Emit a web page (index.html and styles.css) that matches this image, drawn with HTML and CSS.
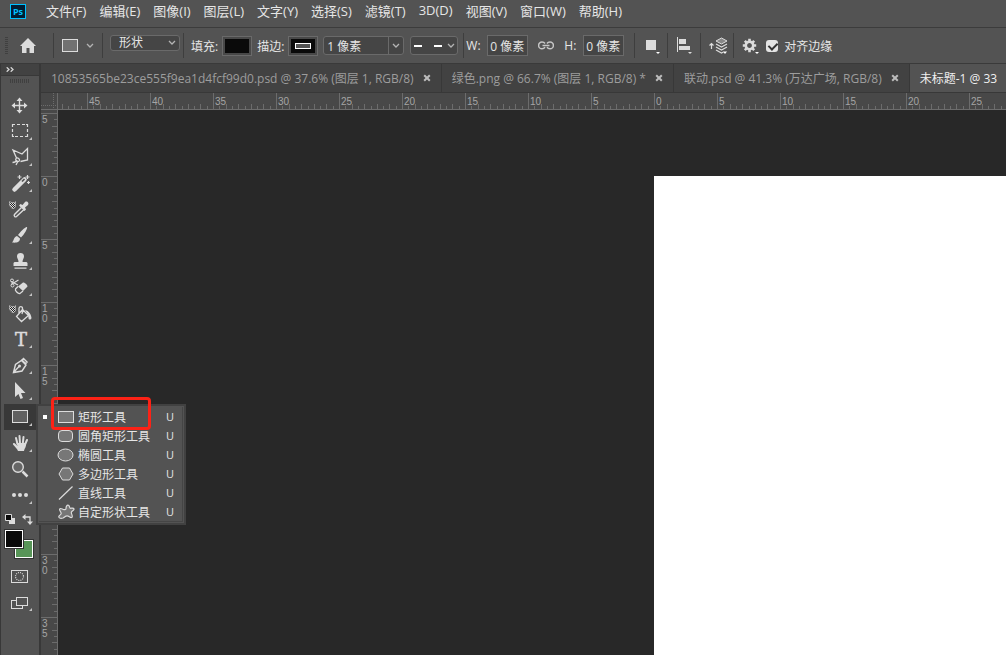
FILE: index.html
```html
<!DOCTYPE html>
<html lang="zh-CN">
<head>
    <meta charset="UTF-8">
    <meta name="viewport" content="width=device-width, initial-scale=1.0">
    <title>未标题-1</title>
    <link rel="stylesheet" href="styles.css">
</head>
<body>

<!-- shared icon parts -->
<svg class="defs" width="0" height="0" aria-hidden="true">
    <defs>
        <pattern id="checker" width="2" height="2" patternUnits="userSpaceOnUse">
            <rect width="2" height="2" fill="#ddd"/>
            <rect width="1" height="1" fill="#222"/>
            <rect x="1" y="1" width="1" height="1" fill="#222"/>
        </pattern>
        <symbol id="more" viewBox="0 0 32 26"><path d="M28 19v3h-3z" fill="#c4c4c4"/></symbol>
        <symbol id="chevron" viewBox="0 0 8 6"><path d="M1 1l3 3 3-3" fill="none" stroke="#b4b4b4" stroke-width="1.3"/></symbol>
        <symbol id="close" viewBox="0 0 8 8"><path d="M1.2 1.2l5.6 5.6M6.8 1.2L1.2 6.8" stroke="#bcbcbc" stroke-width="2"/></symbol>
    </defs>
</svg>

<header class="menu-bar">
    <svg class="logo" width="16" height="15" viewBox="0 0 16 15" role="img" aria-label="Ps">
        <rect x=".5" y=".5" width="15" height="14" fill="#001d33" stroke="#00c0ff"/>
        <text x="8" y="11" text-anchor="middle" class="logo-text">Ps</text>
    </svg>
    <nav class="menus">
        <a href="#">文件(F)</a>
        <a href="#">编辑(E)</a>
        <a href="#">图像(I)</a>
        <a href="#">图层(L)</a>
        <a href="#">文字(Y)</a>
        <a href="#">选择(S)</a>
        <a href="#">滤镜(T)</a>
        <a href="#">3D(D)</a>
        <a href="#">视图(V)</a>
        <a href="#">窗口(W)</a>
        <a href="#">帮助(H)</a>
    </nav>
</header>

<div class="options-bar">
    <div class="grip-v"></div>
    <button class="home" aria-label="主页">
        <svg width="16" height="15" viewBox="0 0 16 15"><path d="M8 0L0 8h2v7h4.500v-5h3v5H14V8h2z" fill="#dcdcdc"/></svg>
    </button>
    <div class="sep"></div>
    <button class="preset" aria-label="矩形工具">
        <svg width="16" height="13" viewBox="0 0 16 13"><rect x=".5" y=".5" width="15" height="12" fill="#717171" stroke="#dcdcdc"/></svg>
        <svg width="8" height="6"><use href="#chevron"/></svg>
    </button>
    <div class="sep"></div>
    <div class="select-box mode">
        <select aria-label="工具模式"><option>形状</option></select>
        <svg width="8" height="6"><use href="#chevron"/></svg>
    </div>
    <div class="sep"></div>
    <div class="field">
        <label for="fill">填充:</label>
        <button id="fill" class="swatch"></button>
    </div>
    <div class="field">
        <label for="stroke">描边:</label>
        <button id="stroke" class="swatch"><span class="stroke-mark"></span></button>
    </div>
    <div class="combo">
        <input type="text" value="1 像素" aria-label="描边宽度">
        <button aria-label="描边宽度选项"><svg width="8" height="6"><use href="#chevron"/></svg></button>
    </div>
    <button class="dash" aria-label="描边类型">
        <svg width="28" height="2" viewBox="0 0 28 2"><path d="M0 1h8M20 1h8" stroke="#fff" stroke-width="2"/></svg>
        <svg width="8" height="6"><use href="#chevron"/></svg>
    </button>
    <div class="sep"></div>
    <label class="dim" for="w">W:</label>
    <input class="num" id="w" type="text" value="0 像素">
    <button class="link" aria-label="链接">
        <svg width="16" height="9" viewBox="0 0 16 9" fill="none" stroke="#c6c6c6" stroke-width="1.5">
            <path d="M7 2.500C6 1 4.500 1 4 1a3.300 3.300 0 000 6.800c1 0 2.200-.3 3-1.600M9 2.500C10 1 11.500 1 12 1a3.300 3.300 0 010 6.800c-1 0-2.200-.3-3-1.600M4.500 4.400h7"/>
        </svg>
    </button>
    <label class="dim" for="h">H:</label>
    <input class="num" id="h" type="text" value="0 像素">
    <div class="sep wide"></div>
    <button class="op" aria-label="路径操作">
        <svg width="20" height="20" viewBox="0 0 20 20"><path d="M3 4h10v10H3z" fill="#dcdcdc"/><path d="M13 16h4l-2 2z" fill="#fff"/></svg>
    </button>
    <div class="sep"></div>
    <button class="op" aria-label="路径对齐方式">
        <svg width="20" height="20" viewBox="0 0 20 20" fill="#dcdcdc"><path d="M1 1h1v15H1zM3 3h7v5H3zM3 10h11v4H3z"/><path d="M12 16h4l-2 2z"/></svg>
    </button>
    <div class="sep"></div>
    <button class="op" aria-label="路径排列方式">
        <svg width="20" height="20" viewBox="0 0 20 20">
            <path d="M2.500 7.500V13M.5 9.500l2-2 2 2" stroke="#dcdcdc" stroke-width="1.200" fill="none"/>
            <path d="M7 5l5.500-3L18 5l-5.500 3z" fill="#888" stroke="#dcdcdc"/>
            <path d="M7 8l5.500 3L18 8M7 11l5.500 3 5.500-3M7 14l5.500 3 2-1" stroke="#dcdcdc" stroke-width="1.200" fill="none"/>
            <path d="M14 15.500h4l-2 2.500z" fill="#fff"/>
        </svg>
    </button>
    <div class="sep"></div>
    <button class="op" aria-label="设置">
        <svg width="20" height="20" viewBox="0 0 20 20">
            <g transform="translate(7.500 9.500)" stroke="#dcdcdc">
                <circle r="3.700" fill="none" stroke-width="2.600"/>
                <path d="M0-6.700v2.500M0 6.700V4.200M-6.700 0h2.500M6.700 0H4.200M-4.700-4.700l1.800 1.800M4.700 4.700L2.900 2.900M-4.700 4.700l1.800-1.800M4.700-4.700L2.900-2.900" stroke-width="2.600"/>
            </g>
            <path d="M13 16h4l-2 2z" fill="#fff"/>
        </svg>
    </button>
    <div class="check">
        <input type="checkbox" id="edges" checked>
        <label for="edges">对齐边缘</label>
    </div>
</div>

<main class="app">
    <aside class="toolbar">
        <button class="expand" aria-label="展开面板">
            <svg width="8" height="5" viewBox="0 0 8 5"><path d="M.7.300L3 2.500.7 4.700M4.700.300L7 2.500 4.700 4.700" fill="none" stroke="#d8d8d8" stroke-width="1.300"/></svg>
        </button>
        <div class="grip-h"></div>

        <button class="tool" aria-label="移动工具">
            <svg viewBox="0 0 32 26"><path d="M15.500 7v13M9 13.500h13" stroke="#dcdcdc" stroke-width="1.400"/><path d="M15.500 5.500l3 3.500h-6zM15.500 21.500l3-3.500h-6zM7.500 13.500l3.500-3v6zM23.500 13.500l-3.500-3v6z" fill="#dcdcdc"/></svg>
        </button>
        <button class="tool" aria-label="矩形选框工具">
            <svg viewBox="0 0 32 26"><path d="M8.500 9V6.500H11M13 6.500h3M18 6.500h3M22 6.500h1.500V9M23.500 11v3M23.500 16v2.500H21M19 18.500h-3M14 18.500h-3M10 18.500H8.500V16M8.500 14v-3" fill="none" stroke="#dcdcdc" stroke-width="1.200"/><use href="#more"/></svg>
        </button>
        <button class="tool" aria-label="多边形套索工具">
            <svg viewBox="0 0 32 26"><path d="M12.500 14L9 6l9 4 5.500-5.500V16l-7 1.500M12.500 14a2 2 0 103 2.500c.3-1.500-1.500-3-3-2.500zM13 16c-1 2-2 2.500-4.500 2.500M14 17l-2 4" fill="none" stroke="#dcdcdc" stroke-width="1.300"/><use href="#more"/></svg>
        </button>
        <button class="tool" aria-label="魔棒工具">
            <svg viewBox="0 0 32 26"><path d="M10.500 19.500l10-10" stroke="#dcdcdc" stroke-width="4.500" stroke-linecap="round"/><path d="M18 11.500l2.500-2.500" stroke="#555" stroke-width="1.700"/><path d="M15.500 5v4M13.500 7h4M23.500 5v4M21.500 7h4M24.500 11v3M23 12.500h3" stroke="#dcdcdc" stroke-width="1.200"/><use href="#more"/></svg>
        </button>
        <button class="tool" aria-label="吸管工具">
            <svg viewBox="0 0 32 26"><path d="M5.500 5.500l2 1h3l1-1v5l-1.500 2H8l-2.500-3z" fill="url(#checker)" stroke="#ccc" stroke-width=".6"/><path d="M17.500 11.500l-7 7c-1 1.500.8 3 2 2l7.500-7" fill="none" stroke="#dcdcdc" stroke-width="1.400"/><path d="M15 9.500l1.500-1.500 2 1 2.500-3c2-1.500 4.500 1 3 3l-3 2.500 1 2-1.500 1.500z" fill="#dcdcdc"/></svg>
        </button>
        <button class="tool" aria-label="画笔工具">
            <svg viewBox="0 0 32 26"><path d="M23 5c1 1-3 8-6 10.500l-3-2.500C16 10 22 4 23 5zM13 14l3 2.500c0 4-4 4.500-8 4 2-1.500 1.500-5.500 5-6.500z" fill="#dcdcdc"/><use href="#more"/></svg>
        </button>
        <button class="tool" aria-label="仿制图章工具">
            <svg viewBox="0 0 32 26"><path d="M13 8.500a3.500 3.500 0 117 0c0 2-1.500 2.500-1.500 5.500h4l1 1v3h-14v-3l1-1h4c0-3-1.500-3.500-1.500-5.500zM10.500 19.500h12v1.200h-12z" fill="#dcdcdc"/><use href="#more"/></svg>
        </button>
        <button class="tool" aria-label="橡皮擦工具">
            <svg viewBox="0 0 32 26"><path d="M7 7.500l7 3.500M7 10.500L14.500 6" stroke="#dcdcdc" stroke-width="1.200"/><circle cx="8" cy="6.500" r="1.500" fill="none" stroke="#dcdcdc"/><circle cx="8.500" cy="11.500" r="1.500" fill="none" stroke="#dcdcdc"/><path d="M19 8.500c1-.8 5 2.500 4.500 4L19 17l-5-4.500z" fill="#dcdcdc"/><path d="M14 12.500L11.500 15c-.8 1.500 2.500 5 4.500 4.500l3-2.500" fill="none" stroke="#dcdcdc" stroke-width="1.300"/><use href="#more"/></svg>
        </button>
        <button class="tool" aria-label="油漆桶工具">
            <svg viewBox="0 0 32 26"><path d="M5.500 5.500l2 1h3l1-1v5l-1.500 2H8l-2.500-3z" fill="url(#checker)" stroke="#ccc" stroke-width=".6"/><path d="M12.500 16.500l6-7 6 6-7 6zM18.500 13V8.500c0-2.500-3.500-2.500-3.500 0V13M19 9l-1 5" fill="none" stroke="#dcdcdc" stroke-width="1.300"/><path d="M21 10c4 1 6 4 6.500 8-.5 2-3 2-3 0 0-2-.5-4-3.500-8z" fill="#dcdcdc"/></svg>
        </button>
        <button class="tool" aria-label="文字工具">
            <svg viewBox="0 0 32 26"><text x="17" y="20" text-anchor="middle" class="type-mark">T</text><use href="#more"/></svg>
        </button>
        <button class="tool" aria-label="钢笔工具">
            <svg viewBox="0 0 32 26"><path d="M9.500 20.500l2-8 6-4 4.500 4.500-4 6zM9.500 20.500l5.500-6" fill="none" stroke="#dcdcdc" stroke-width="1.400"/><circle cx="15.500" cy="14" r="1.500" fill="#dcdcdc"/><path d="M17 8l2.500-2.500 4.500 4.500L21.500 13z" fill="#dcdcdc"/><path d="M19.500 8l2.500 2.500" stroke="#555"/><use href="#more"/></svg>
        </button>
        <button class="tool" aria-label="路径选择工具">
            <svg viewBox="0 0 32 26"><path d="M11 4v15l3.500-3 2 5 2.500-1-2-5h4.500z" fill="#dcdcdc"/><use href="#more"/></svg>
        </button>
        <div class="tool-slot">
            <button class="tool selected" aria-label="矩形工具">
                <svg viewBox="0 0 32 26"><rect x="8.500" y="6.500" width="15" height="12" fill="#606060" stroke="#dcdcdc"/><use href="#more"/></svg>
            </button>
            <div class="flyout">
                <div class="flyout-list">
                    <button class="flyout-item">
                        <span class="dot on"></span>
                        <svg viewBox="0 0 18 16"><rect x="1.500" y="2.500" width="15" height="11" fill="#777" stroke="#dcdcdc"/></svg>
                        <span>矩形工具</span><kbd>U</kbd>
                    </button>
                    <button class="flyout-item">
                        <span class="dot"></span>
                        <svg viewBox="0 0 18 16"><rect x="1.500" y="2.500" width="14" height="11" rx="3.500" fill="#777" stroke="#dcdcdc"/></svg>
                        <span>圆角矩形工具</span><kbd>U</kbd>
                    </button>
                    <button class="flyout-item">
                        <span class="dot"></span>
                        <svg viewBox="0 0 18 16"><ellipse cx="8.500" cy="8" rx="7.500" ry="6" fill="#777" stroke="#dcdcdc"/></svg>
                        <span>椭圆工具</span><kbd>U</kbd>
                    </button>
                    <button class="flyout-item">
                        <span class="dot"></span>
                        <svg viewBox="0 0 18 16"><path d="M5.500 2h7l3.500 6-3.500 6h-7L2 8z" fill="#777" stroke="#dcdcdc"/></svg>
                        <span>多边形工具</span><kbd>U</kbd>
                    </button>
                    <button class="flyout-item">
                        <span class="dot"></span>
                        <svg viewBox="0 0 18 16"><path d="M2 14.500L15.500 1.500" stroke="#dcdcdc" stroke-width="1.200"/></svg>
                        <span>直线工具</span><kbd>U</kbd>
                    </button>
                    <button class="flyout-item">
                        <span class="dot"></span>
                        <svg viewBox="0 0 18 16"><path d="M9 4.500C9 2 10 .8 11.500 1.300 13 2 12 4 13.500 4.300c1.500 0 3-.8 3.500.7.300 1.500-2.500 2-2.700 3.500 0 1.500 1.700 3.500.7 4.800-1.500 1.200-3-1.500-4.800-1.500-2 0-2.700 1.700-4.200 2.200-2 .6-4 .3-4.200-1C1.500 11.500 4 11 4.200 9.500 4.300 8 2 6.500 2.700 5 3.500 3.500 5.500 5.500 7 5.700 8 5.800 9 5.500 9 4.500z" fill="#777" stroke="#dcdcdc" stroke-width="1.200"/></svg>
                        <span>自定形状工具</span><kbd>U</kbd>
                    </button>
                </div>
                <div class="highlight"></div>
            </div>
        </div>
        <button class="tool" aria-label="抓手工具">
            <svg viewBox="0 0 32 26"><path d="M13.500 14L12 8M16 13.500L15.500 6M18.800 13.500L19.500 7M21 14.500l2-4.500" stroke="#dcdcdc" stroke-width="2" stroke-linecap="round"/><path d="M12.500 13h9.500c.5 4-1.500 5-2 8h-6c-.5-2-3-4-5-6.500-.5-1.500 1.500-2 2.500-.5l2 2z" fill="#dcdcdc"/><use href="#more"/></svg>
        </button>
        <button class="tool" aria-label="缩放工具">
            <svg viewBox="0 0 32 26"><circle cx="14" cy="11" r="5.300" fill="#666" stroke="#dcdcdc" stroke-width="1.400"/><path d="M18.500 15.500l5 5" stroke="#dcdcdc" stroke-width="2.500"/></svg>
        </button>
        <button class="tool" aria-label="编辑工具栏">
            <svg viewBox="0 0 32 26"><g fill="#dcdcdc"><circle cx="10" cy="13" r="2"/><circle cx="16" cy="13" r="2"/><circle cx="22" cy="13" r="2"/></g><use href="#more"/></svg>
        </button>
        <div class="mini">
            <button aria-label="默认前景色和背景色"><svg width="11" height="11" viewBox="0 0 11 11"><path d="M4 4h6v6H4z" fill="#dcdcdc"/><path d="M.5.500h6v6h-6z" fill="#0a0a0a" stroke="#dcdcdc"/></svg></button>
            <button aria-label="切换前景色和背景色"><svg width="11" height="11" viewBox="0 0 11 11"><path d="M2 3h6v6" fill="none" stroke="#dcdcdc" stroke-width="1.300"/><path d="M0 3l3.500-3v6zM8 11L5 7.500h6z" fill="#dcdcdc"/></svg></button>
        </div>
        <div class="colors">
            <button class="bg-color" aria-label="背景色"></button>
            <button class="fg-color" aria-label="前景色"></button>
        </div>
        <button class="tool" aria-label="快速蒙版">
            <svg viewBox="0 0 32 26"><rect x="7.500" y="7.500" width="16" height="12" fill="none" stroke="#dcdcdc"/><circle cx="15.500" cy="13.500" r="4" fill="none" stroke="#dcdcdc" stroke-width="1.200" stroke-dasharray="1 1.100"/></svg>
        </button>
        <button class="tool" aria-label="屏幕模式">
            <svg viewBox="0 0 32 26"><rect x="7.500" y="11.500" width="11" height="8" fill="none" stroke="#dcdcdc"/><rect x="12.500" y="8.500" width="11" height="8" fill="#535353" stroke="#dcdcdc"/><use href="#more"/></svg>
        </button>
    </aside>

    <section class="document">
        <div class="tabs">
            <div class="tab">
                <a href="#">10853565be23ce555f9ea1d4fcf99d0.psd @ 37.6% (图层 1, RGB/8)</a>
                <button aria-label="关闭"><svg width="8" height="8"><use href="#close"/></svg></button>
            </div>
            <div class="tab">
                <a href="#">绿色.png @ 66.7% (图层 1, RGB/8) *</a>
                <button aria-label="关闭"><svg width="8" height="8"><use href="#close"/></svg></button>
            </div>
            <div class="tab">
                <a href="#">联动.psd @ 41.3% (万达广场, RGB/8)</a>
                <button aria-label="关闭"><svg width="8" height="8"><use href="#close"/></svg></button>
            </div>
            <div class="tab active">
                <a href="#">未标题-1 @ 33</a>
            </div>
        </div>
        <div class="stage">
            <div class="corner"></div>
            <div class="ruler-x">
                <span></span><span>45</span><span>40</span><span>35</span><span>30</span><span>25</span><span>20</span><span>15</span><span>10</span><span>5</span><span>0</span><span>5</span><span>10</span><span>15</span><span>20</span><span>25</span>
            </div>
            <div class="ruler-y">
                <span></span><span>5</span><span>0</span><span>5</span><span>1<br>0</span><span>1<br>5</span><span>2<br>0</span><span>2<br>5</span><span>3<br>0</span><span>3<br>5</span>
            </div>
            <div class="canvas">
                <div class="artboard"></div>
            </div>
        </div>
    </section>
</main>

</body>
</html>
```

FILE: styles.css
```css
* {
    box-sizing: border-box;
}
body {
    margin: 0;
    height: 100vh;
    display: flex;
    flex-direction: column;
    overflow: hidden;
    background-color: #535353;
    color: #e6e6e6;
    font-family: "Open Sans", "Noto Sans CJK SC", sans-serif;
    font-size: 12px;
}
button, input, select {
    margin: 0;
    padding: 0;
    border: none;
    background: none;
    color: inherit;
    font: inherit;
}
svg {
    display: block;
    flex: none;
}
a {
    color: inherit;
    text-decoration: none;
    white-space: nowrap;
}
.defs {
    position: absolute;
}

/* menu bar */
.menu-bar {
    flex: none;
    height: 28px;
    display: flex;
    align-items: center;
    padding: 0 10px 4px;
    border-bottom: 1px solid #3c3c3c;
}
.logo-text {
    font-size: 9px;
    font-weight: bold;
    fill: #00c0ff;
}
.menus {
    display: flex;
    gap: 13px;
    margin-left: 20px;
    padding-bottom: 2px;
    font-size: 13px;
}

/* options bar */
.options-bar {
    flex: none;
    height: 36px;
    display: flex;
    align-items: center;
    border-bottom: 1px solid #3a3a3a;
    white-space: nowrap;
}
.options-bar button {
    flex: none;
}
.grip-v {
    width: 3px;
    height: 18px;
    margin-left: 5px;
    background: repeating-linear-gradient(#404040 0 1px, transparent 1px 2px);
}
.home {
    margin: 0 17px 0 12px;
}
.sep {
    flex: none;
    width: 1px;
    height: 25px;
    background-color: #3e3e3e;
}
.sep.wide {
    margin-left: 10px;
}
.preset {
    display: flex;
    align-items: center;
    gap: 8px;
    margin: 0 8px;
}
.select-box {
    position: relative;
    align-self: flex-start;
    width: 70px;
    height: 16px;
    margin: 7px 3px 0 7px;
    border: 1px solid #6a6a6a;
    border-radius: 3px;
    background-color: #454545;
}
.select-box select {
    appearance: none;
    display: block;
    width: 100%;
    height: 14px;
    padding-left: 8px;
    line-height: 14px;
}
.select-box svg {
    position: absolute;
    right: 3px;
    top: 4px;
    pointer-events: none;
}
.field {
    display: flex;
    align-items: center;
    gap: 4px;
    margin-left: 5px;
}
.sep + .field {
    margin-left: 7px;
}
.swatch {
    display: flex;
    align-items: center;
    justify-content: center;
    width: 30px;
    height: 20px;
    border: 1px solid #6a6a6a;
    background-color: #0a0a0a;
    box-shadow: inset 0 0 0 2px #484848;
}
.stroke-mark {
    width: 16px;
    height: 6px;
    border: 1px solid #fff;
    background-color: #535353;
}
.combo {
    display: flex;
    width: 81px;
    height: 19px;
    margin-left: 5px;
    border: 1px solid #6a6a6a;
    border-radius: 3px;
    background-color: #454545;
}
.combo input {
    flex: 1;
    min-width: 0;
    padding-left: 3px;
}
.combo button {
    display: flex;
    align-items: center;
    justify-content: center;
    width: 15px;
    border-left: 1px solid #6a6a6a;
}
.dash {
    display: flex;
    align-items: center;
    gap: 5px;
    width: 48px;
    height: 19px;
    margin: 0 5px 0 6px;
    padding-left: 3px;
    border: 1px solid #6a6a6a;
    border-radius: 3px;
    background-color: #454545;
}
.dim {
    width: 21px;
    padding-left: 2px;
}
.num {
    width: 41px;
    height: 21px;
    margin-left: 2px;
    padding-left: 2px;
    border: 1px solid #6a6a6a;
    background-color: #454545;
}
.link {
    margin: 0 6px 0 10px;
}
.link + .dim {
    padding-left: 4px;
}
.op {
    padding: 0 4px 0 8px;
}
.check {
    display: flex;
    align-items: center;
    gap: 6px;
}
.check input {
    appearance: none;
    width: 12px;
    height: 12px;
    border-radius: 3px;
    background-color: #e4e4e4;
}
.check input:checked::after {
    content: "";
    display: block;
    width: 4px;
    height: 7px;
    margin: 1px 0 0 4px;
    border: solid #333;
    border-width: 0 2px 2px 0;
    transform: rotate(45deg);
}

/* tool panel */
.app {
    flex: 1;
    min-height: 0;
    display: flex;
}
.toolbar {
    position: relative;
    z-index: 1;
    flex: none;
    width: 41px;
    border: solid #383838;
    border-width: 0 2px 0 1px;
}
.expand {
    display: flex;
    align-items: center;
    width: 100%;
    height: 12px;
    padding-left: 5px;
    border-bottom: 1px solid #383838;
    background-color: #424242;
}
.grip-h {
    width: 20px;
    height: 4px;
    margin: 3px 0 9px 9px;
    background: repeating-linear-gradient(90deg, #404040 0 1px, transparent 1px 2px);
}
.tool {
    display: block;
    width: 32px;
    height: 26px;
    margin-left: 3px;
}
.tool svg {
    width: 32px;
    height: 26px;
}
.tool.selected {
    background-color: #383838;
}
.type-mark {
    font-family: "DejaVu Serif", serif;
    font-size: 18px;
    fill: #dcdcdc;
    stroke: #dcdcdc;
    stroke-width: 0.5px;
}
.tool-slot {
    position: relative;
}
.flyout {
    position: absolute;
    left: 35px;
    top: 0;
    width: 150px;
    padding: 1px;
    border: 2px solid #414141;
    background-color: #535353;
}
.flyout-list {
    border: solid #454545;
    border-width: 0 1px 1px 0;
}
.flyout-item {
    display: grid;
    grid-template-columns: 5px 18px 1fr 16px;
    align-items: center;
    width: 100%;
    height: 19px;
    padding-left: 4px;
    text-align: left;
    white-space: nowrap;
}
.flyout-item svg {
    width: 18px;
    height: 16px;
    margin-left: 9px;
}
.flyout-item span:nth-of-type(2) {
    margin-left: 12px;
}
.flyout-item kbd {
    font: inherit;
    font-size: 11px;
}
.dot {
    width: 4px;
    height: 4px;
}
.dot.on {
    background-color: #fff;
}
.highlight {
    position: absolute;
    left: 13px;
    top: -9px;
    width: 100px;
    height: 33px;
    border: 3px solid #fc2216;
    border-radius: 4px;
    pointer-events: none;
}
.mini {
    display: flex;
    gap: 6px;
    height: 20px;
    padding: 6px 0 0 4px;
}
.mini button {
    height: 11px;
}
.colors {
    position: relative;
    height: 35px;
    margin-left: 4px;
}
.fg-color,
.bg-color {
    position: absolute;
    width: 18px;
    height: 18px;
    border: 1px solid #fff;
    outline: 1px solid #333;
}
.fg-color {
    left: 0;
    top: 2px;
    background-color: #0a0a0a;
}
.bg-color {
    left: 10px;
    top: 12px;
    background-color: #589558;
}

/* document area */
.document {
    flex: 1;
    min-width: 0;
    display: flex;
    flex-direction: column;
}
.tabs {
    display: flex;
    height: 29px;
    overflow: hidden;
    border-bottom: 1px solid #383838;
    background-color: #424242;
    color: #9d9d9d;
}
.tab {
    flex: none;
    display: flex;
    align-items: center;
    gap: 9px;
    padding: 0 10px;
    border-right: 1px solid #383838;
}
.tab.active {
    flex: 1 0 auto;
    background-color: #535353;
    color: #f0f0f0;
}
.stage {
    flex: 1;
    min-height: 0;
    display: grid;
    grid-template: 17px 1fr / 17px 1fr;
    background-color: #484848;
}
.corner {
    border: solid #6c6c6c;
    border-width: 0 1px 1px 0;
    background:
        repeating-linear-gradient(90deg, #6c6c6c 0 1px, transparent 1px 2px) 0 12px / 100% 1px no-repeat,
        repeating-linear-gradient(#6c6c6c 0 1px, transparent 1px 2px) 12px 0 / 1px 100% no-repeat;
}
.ruler-x,
.ruler-y {
    display: flex;
    overflow: hidden;
    color: #a5a5a5;
    font-family: "Liberation Sans", sans-serif;
    font-size: 10px;
    line-height: 10px;
}
.ruler-x {
    border-bottom: 1px solid #6c6c6c;
}
.ruler-y {
    flex-direction: column;
    border-right: 1px solid #6c6c6c;
}
/* one span covers five units, 63px */
.ruler-x span {
    flex: none;
    width: 63px;
    padding: 4px 0 0 1px;
    border-left: 1px solid #6c6c6c;
    background:
        linear-gradient(90deg, transparent 12px, #6c6c6c 12px 13px, transparent 13px 24px, #6c6c6c 24px 25px, transparent 25px 37px, #6c6c6c 37px 38px, transparent 38px 49px, #6c6c6c 49px 50px, transparent 50px) 0 100% / 100% 5px no-repeat,
        linear-gradient(90deg, transparent 5px, #6c6c6c 5px 6px, transparent 6px 18px, #6c6c6c 18px 19px, transparent 19px 31px, #6c6c6c 31px 32px, transparent 32px 43px, #6c6c6c 43px 44px, transparent 44px 56px, #6c6c6c 56px 57px, transparent 57px) 0 100% / 100% 3px no-repeat;
}
.ruler-y span {
    flex: none;
    height: 63px;
    padding: 1px 0 0 1px;
    border-top: 1px solid #6c6c6c;
    background:
        linear-gradient(transparent 12px, #6c6c6c 12px 13px, transparent 13px 24px, #6c6c6c 24px 25px, transparent 25px 37px, #6c6c6c 37px 38px, transparent 38px 49px, #6c6c6c 49px 50px, transparent 50px) 100% 0 / 5px 100% no-repeat,
        linear-gradient(transparent 5px, #6c6c6c 5px 6px, transparent 6px 18px, #6c6c6c 18px 19px, transparent 19px 31px, #6c6c6c 31px 32px, transparent 32px 43px, #6c6c6c 43px 44px, transparent 44px 56px, #6c6c6c 56px 57px, transparent 57px) 100% 0 / 3px 100% no-repeat;
}
/* the rulers start part of the way through a span */
.ruler-x span:first-child {
    margin-left: -34px;
}
.ruler-y span:first-child {
    margin-top: -60px;
}
.canvas {
    display: flex;
    padding: 66px 0 0 596px;
    background-color: #282828;
}
.artboard {
    flex: 1;
    background-color: #fff;
}
```
